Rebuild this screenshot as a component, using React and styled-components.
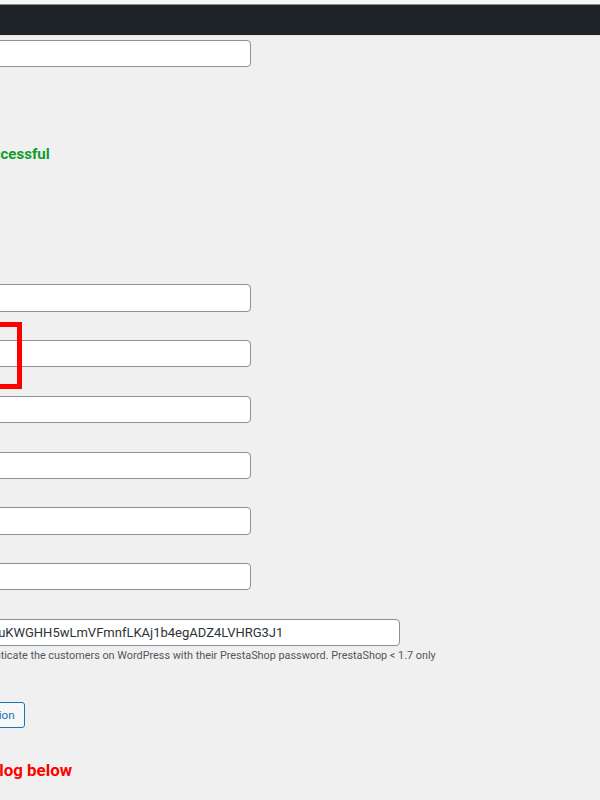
import React from "react"
import styled, { createGlobalStyle } from "styled-components"

const GlobalStyle = createGlobalStyle`
  html, body {
    margin: 0;
    padding: 0;
    background: #f0f0f1;
    font-family: Roboto, "Liberation Sans", sans-serif;
    overflow: hidden;
  }
`

const TopStrip = styled.div`
  height: 4px;
  background: #f6f7f7;
  border-bottom: 1px solid #8c8f94;
`

const AdminBar = styled.div`
  height: 30px;
  background: #1d2327;
  border-bottom: 1px solid #e4e4e6;
`

const Content = styled.div`
  position: relative;
  margin-left: -72px;
  padding-top: 4px;
`

const TextInput = styled.input`
  display: block;
  box-sizing: border-box;
  width: ${props => props.$width}px;
  height: 27.3px;
  margin: 0;
  padding: 0 7px;
  background: #fff;
  border: 1px solid #8c8f94;
  border-radius: 4px;
  font-family: Roboto, "Liberation Sans", sans-serif;
  font-size: 13px;
  color: #2c3338;
  outline: none;
`

const Message = styled.p`
  margin: ${props => props.$top}px 0 0;
  font-size: ${props => (props.$tone === "error" ? 16.9 : 15)}px;
  font-weight: 700;
  line-height: 20px;
  color: ${props => (props.$tone === "error" ? "#ff0000" : "#119c2b")};
`

const FieldList = styled.div`
  position: relative;
  display: flex;
  flex-direction: column;
  gap: 28.4px;
  margin-top: 120.6px;
`

const Highlight = styled.div`
  position: absolute;
  top: 37.2px;
  left: 0;
  width: 94px;
  height: 67.3px;
  box-sizing: border-box;
  border: 5px solid #ff0000;
  pointer-events: none;
`

const Description = styled.p`
  margin: 2px 0 0;
  font-size: 10.85px;
  line-height: 16px;
  color: #50575e;
`

const Button = styled.button`
  display: block;
  box-sizing: border-box;
  height: 26.6px;
  margin-top: 37.7px;
  padding: 0 9px 0 8px;
  background: #f6f7f7;
  border: 1px solid #2271b1;
  border-radius: 3px;
  font-family: Roboto, "Liberation Sans", sans-serif;
  font-size: 11.7px;
  color: #2271b1;
`

const fields = ["", "", "", "", "", ""]

export default function App() {
  return (
    <>
      <GlobalStyle />
      <TopStrip />
      <AdminBar />
      <Content>
        <TextInput $width={323} defaultValue="" />
        <Message $top={76.6}>Test is successful</Message>
        <FieldList>
          <Highlight />
          {fields.map((value, i) => (
            <TextInput key={i} $width={323} defaultValue={value} />
          ))}
          <TextInput $width={472} defaultValue="kQ7rTz8x9uKWGHH5wLmVFmnfLKAj1b4egADZ4LVHRG3J1" />
        </FieldList>
        <Description>
          Used to authenticate the customers on WordPress with their PrestaShop password. PrestaShop &lt; 1.7 only
        </Description>
        <Button>Start migration</Button>
        <Message $top={31.6} $tone="error">Read the log below</Message>
      </Content>
    </>
  )
}
